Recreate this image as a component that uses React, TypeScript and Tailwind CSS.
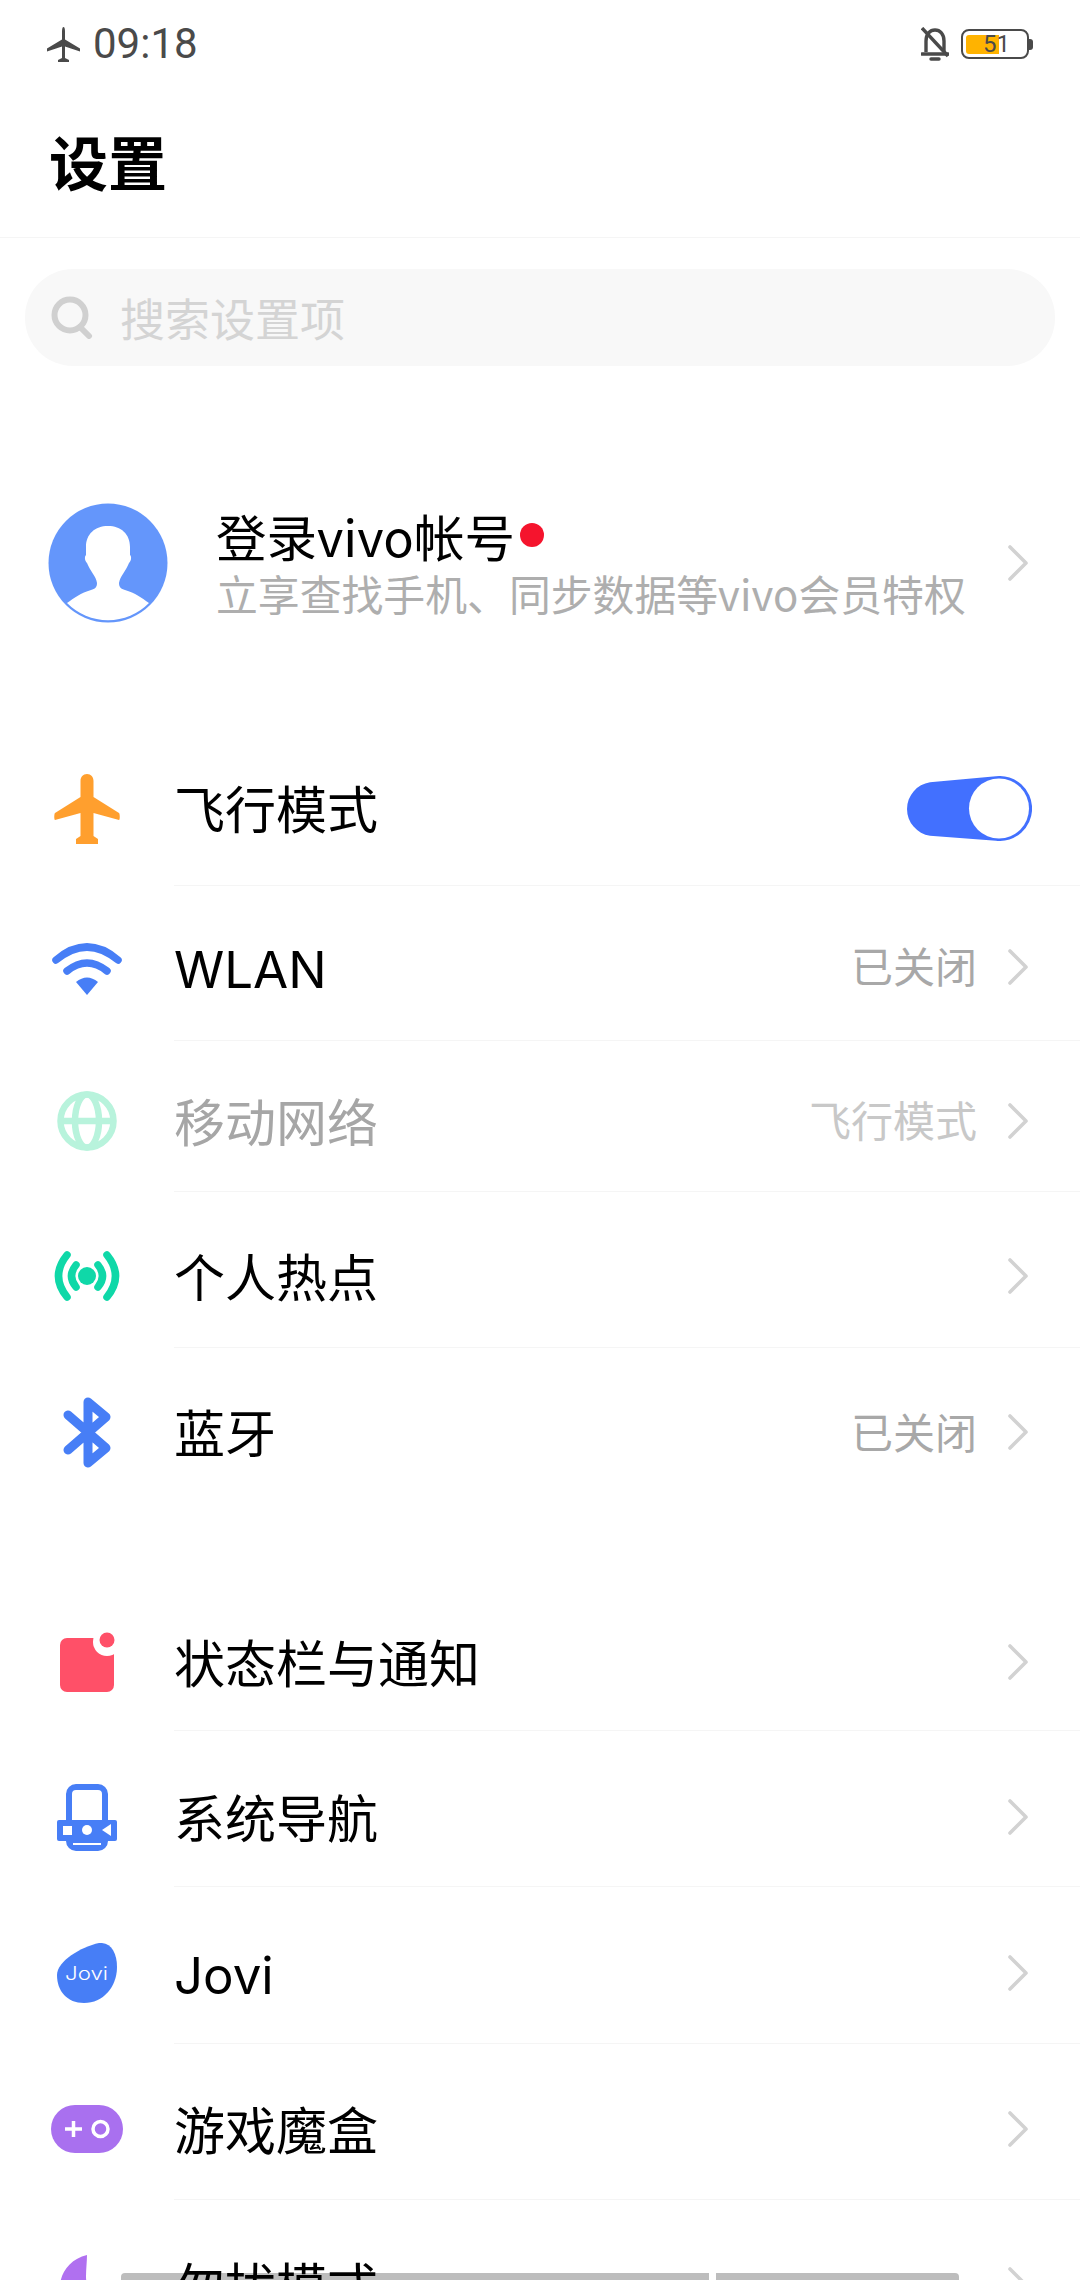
const PLANE = "M33 0C37 0 39.5 3 39.5 7L39.5 23L65 39C66 40 66 46 65 46L39.5 39L39.5 62L44 65L44 70L22 70L22 65L26.5 62L26.5 39L1 46C0 46 0 40 1 39L26.5 23L26.5 7C26.5 3 29 0 33 0Z";
const THIN_PLANE = "M33 0C35 0 36 4 36 9L36 25L66 43L66 49L36 39L36 62L44 66L44 70L22 70L22 66L30 62L30 39L0 49L0 43L30 25L30 9C30 4 31 0 33 0Z";

const Chevron = () => (
  <svg width="22" height="38" viewBox="0 0 22 38" fill="none" className="shrink-0">
    <path d="M3 3L19 19L3 35" stroke="#d2d2d2" strokeWidth="3.6" strokeLinecap="round" strokeLinejoin="round" />
  </svg>
);

const PlaneIcon = () => (
  <svg width="66" height="70" viewBox="0 0 66 70">
    <path d={PLANE} fill="#ff9f2e" />
  </svg>
);

const WifiIcon = () => (
  <svg width="70" height="55" viewBox="0 0 70 55" fill="none">
    <path d="M4 20Q35 -6 66 20" stroke="#477ef6" strokeWidth="7.5" strokeLinecap="round" />
    <path d="M15 31Q35 15 55 31" stroke="#477ef6" strokeWidth="7.5" strokeLinecap="round" />
    <path d="M24 42Q35 33 46 42L35 55Z" fill="#477ef6" />
  </svg>
);

const GlobeIcon = () => (
  <svg width="60" height="60" viewBox="0 0 60 60" fill="none" stroke="#b8f3dc" strokeWidth="6.5">
    <circle cx="30" cy="30" r="26.5" />
    <ellipse cx="30" cy="30" rx="12" ry="26.5" />
    <path d="M3 30H57" />
  </svg>
);

const HotspotIcon = () => (
  <svg width="66" height="50" viewBox="0 0 66 50" fill="none" stroke="#0fd8a8" strokeWidth="7.5" strokeLinecap="round">
    <path d="M13 4Q-4 25 13 46" />
    <path d="M22 14Q13 25 22 36" />
    <path d="M53 4Q70 25 53 46" />
    <path d="M44 14Q53 25 44 36" />
    <circle cx="33" cy="25" r="9" fill="#0fd8a8" stroke="none" />
  </svg>
);

const BluetoothIcon = () => (
  <svg width="48" height="71" viewBox="0 0 48 71" fill="none">
    <path d="M5 18L43 51L25 66L25 5L43 20L5 53" stroke="#477ef6" strokeWidth="9" strokeLinecap="round" strokeLinejoin="round" />
  </svg>
);

const NoticeIcon = () => (
  <svg width="60" height="60" viewBox="0 0 60 60">
    <rect x="3" y="6" width="54" height="54" rx="7" fill="#ff5068" />
    <circle cx="50" cy="10" r="14" fill="#fff" />
    <circle cx="50" cy="8" r="7.5" fill="#ff5068" />
  </svg>
);

const NavIcon = () => (
  <svg width="60" height="67" viewBox="0 0 60 67">
    <rect x="12" y="3" width="36" height="61" rx="7" fill="none" stroke="#477ef6" strokeWidth="6" />
    <path d="M12 50H48V64H12Z" fill="#477ef6" />
    <rect x="0" y="36" width="60" height="21" rx="2" fill="#477ef6" />
    <rect x="6" y="42" width="9" height="9" fill="#fff" />
    <circle cx="30" cy="46" r="5" fill="#fff" />
    <path d="M54 40V52L45 46Z" fill="#fff" />
    <rect x="16" y="59" width="28" height="2" fill="#fff" />
  </svg>
);

const JoviIcon = () => (
  <svg width="60" height="60" viewBox="0 0 60 60">
    <path d="M0 32C0 18 24 4 42 0C54 -1 60 10 60 24C60 44 46 60 27 60C10 60 0 48 0 32Z" fill="#477ef6" />
    <text x="8" y="37" fontSize="18" textLength="43" lengthAdjust="spacingAndGlyphs" fill="#fff" fontFamily="Inter, sans-serif" fontWeight="300">Jovi</text>
  </svg>
);

const GameIcon = () => (
  <svg width="72" height="48" viewBox="0 0 72 48">
    <rect width="72" height="48" rx="24" fill="#a970ef" />
    <path d="M14 24H31M22.5 16V32" stroke="#fff" strokeWidth="3.5" />
    <circle cx="49.5" cy="24" r="7.5" fill="none" stroke="#fff" strokeWidth="3.5" />
  </svg>
);

const MoonIcon = () => (
  <svg width="55" height="60" viewBox="0 0 55 60">
    <path d="M27 0C10 4 0 18 0 32C0 48 12 60 28 60C40 60 50 54 55 44C38 46 26 36 26 22C26 14 27 6 27 0Z" fill="#b070f0" />
  </svg>
);

const Toggle = () => (
  <svg width="126" height="65" viewBox="0 0 126 65">
    <path d="M24 6.3L90 0.2A32.5 32.5 0 1 1 90 64.8L24 59.7A27 27 0 0 1 24 6.3Z" fill="#4270ff" />
    <circle cx="93" cy="32.5" r="30" fill="#fff" />
  </svg>
);

type Row = {
  label: string;
  icon: React.ReactNode;
  value?: string;
  h: string;
  pt: string;
  line?: boolean;
  dim?: boolean;
  toggle?: boolean;
};

const connectRows: Row[] = [
  { label: "飞行模式", icon: <PlaneIcon />, toggle: true, h: "h-[155px]", pt: "pt-0", line: true },
  { label: "WLAN", icon: <WifiIcon />, value: "已关闭", h: "h-[155px]", pt: "pt-[7px]", line: true },
  { label: "移动网络", icon: <GlobeIcon />, value: "飞行模式", dim: true, h: "h-[151px]", pt: "pt-[9px]", line: true },
  { label: "个人热点", icon: <HotspotIcon />, h: "h-[156px]", pt: "pt-[12px]", line: true },
  { label: "蓝牙", icon: <BluetoothIcon />, value: "已关闭", h: "h-[168px]", pt: "pt-0" },
];

const systemRows: Row[] = [
  { label: "状态栏与通知", icon: <NoticeIcon />, h: "h-[147px]", pt: "pt-[9px]", line: true },
  { label: "系统导航", icon: <NavIcon />, h: "h-[156px]", pt: "pt-[16px]", line: true },
  { label: "Jovi", icon: <JoviIcon />, h: "h-[157px]", pt: "pt-[15px]", line: true },
  { label: "游戏魔盒", icon: <GameIcon />, h: "h-[156px]", pt: "pt-[14px]", line: true },
  { label: "勿扰模式", icon: <MoonIcon />, h: "h-[170px]", pt: "pt-0" },
];

const SettingRow = ({ row }: { row: Row }) => (
  <div className={`flex ${row.h}`}>
    <div className={`flex w-[174px] shrink-0 items-center justify-center ${row.pt}`}>{row.icon}</div>
    <div className={`relative z-10 flex flex-1 items-center pr-[51px] ${row.pt} ${row.line ? "border-b border-[#f5f5f5]" : ""}`}>
      <span className={`flex-1 pt-[6px] font-['Inter','Noto_Sans_CJK_SC',sans-serif] text-[51px] leading-[60px] ${row.dim ? "text-[#a6a6a6]" : "text-black"}`}>
        {row.label}
      </span>
      {row.toggle ? (
        <div className="-mr-[3px]">
          <Toggle />
        </div>
      ) : (
        <div className="flex items-center gap-[30px]">
          {row.value && (
            <span className={`pb-[3px] text-[42px] leading-[50px] ${row.dim ? "text-[#c8c8c8]" : "text-[#a8a8a8]"}`}>{row.value}</span>
          )}
          <Chevron />
        </div>
      )}
    </div>
  </div>
);

export default function App() {
  return (
    <div className="relative h-[2280px] w-[1080px] overflow-hidden bg-white font-['Noto_Sans_CJK_SC','Noto_Sans',sans-serif]">
      {/* status bar */}
      <div className="flex h-[88px] items-center justify-between pl-[47px] pr-[47px]">
        <div className="flex items-center gap-[13px]">
          <svg width="33" height="35" viewBox="0 0 66 70">
            <path d={THIN_PLANE} fill="#4a4a4a" />
          </svg>
          <span className="font-['Roboto',sans-serif] text-[42px] leading-[48px] text-[#4a4a4a]">09:18</span>
        </div>
        <div className="flex items-center gap-[12px]">
          <svg width="28" height="34" viewBox="0 0 28 34" fill="none" stroke="#4a4a4a" strokeWidth="3.4">
            <path d="M5 25V14C5 7 9 3 14 3C19 3 23 7 23 14V25" />
            <path d="M1 27H27" strokeLinecap="round" />
            <path d="M1 1L27 29" />
            <path d="M10 32H18" strokeLinecap="round" />
          </svg>
          <div className="flex items-center">
            <div className="relative h-[30px] w-[68px] rounded-[8px] border-2 border-[#4a4a4a]">
              <div className="absolute left-[3px] top-[4px] h-[19px] w-[33px] rounded-l-[3px] bg-[#ffb300]" />
              <span className="absolute left-[20px] top-[-1px] font-['Roboto',sans-serif] text-[24px] leading-[28px] text-[#4a4a4a]">51</span>
            </div>
            <div className="h-[11px] w-[4px] rounded-r-[3px] bg-[#4a4a4a]" />
          </div>
        </div>
      </div>

      {/* title */}
      <div className="flex h-[150px] items-center border-b border-[#f5f5f5] pb-[3px] pl-[49px]">
        <h1 className="text-[59px] font-bold leading-[64px] text-black">设置</h1>
      </div>

      {/* search */}
      <div className="mx-[25px] mt-[31px] flex h-[97px] items-center gap-[27px] rounded-[48px] bg-[#f8f8f8] pl-[26px]">
        <svg width="42" height="43" viewBox="0 0 42 43" fill="none" stroke="#d0d0d0" strokeWidth="6">
          <circle cx="19" cy="19" r="15.5" />
          <path d="M29 31L38 40" strokeLinecap="round" />
        </svg>
        <span className="text-[45px] leading-[54px] text-[#d4d4d4]">搜索设置项</span>
      </div>

      {/* account */}
      <div className="mt-[137px] flex h-[120px] items-center pl-[48px] pr-[51px]">
        <svg width="120" height="120" viewBox="0 0 120 120" className="shrink-0">
          <circle cx="60" cy="60" r="59.5" fill="#6496fb" />
          <path
            d="M60 23C47 23 38 31 38 44L38 52C36 54 37 58 39 60C42 68 48 73 49 80C49 84 47 86 43 87C33 90 26 95 19 100A57.5 57.5 0 0 0 101 100C94 95 87 90 77 87C73 86 71 84 71 80C72 73 78 68 81 60C83 58 84 54 82 52L82 44C82 31 73 23 60 23Z"
            fill="#fff"
          />
        </svg>
        <div className="ml-[48px] flex-1">
          <div className="flex items-center">
            <span className="text-[50.5px] leading-[56px] text-black">登录vivo帐号</span>
            <span className="ml-[5px] h-[24px] w-[24px] rounded-full bg-[#f5142d]" />
          </div>
          <div className="mt-[3px] text-[41.85px] leading-[54px] text-[#aeaeae]">立享查找手机、同步数据等vivo会员特权</div>
        </div>
        <Chevron />
      </div>

      {/* connection group */}
      <div className="mt-[108px]">
        {connectRows.map((row) => (
          <SettingRow key={row.label} row={row} />
        ))}
      </div>

      {/* system group */}
      <div className="mt-[68px]">
        {systemRows.map((row) => (
          <SettingRow key={row.label} row={row} />
        ))}
      </div>

      {/* scroll strip at the very bottom */}
      <div className="absolute bottom-0 left-[121px] h-[7px] w-[588px] rounded-tl-[4px] bg-[#bdbdbd]" />
      <div className="absolute bottom-0 left-[716px] h-[7px] w-[243px] rounded-tr-[4px] bg-[#bdbdbd]" />
    </div>
  );
}
